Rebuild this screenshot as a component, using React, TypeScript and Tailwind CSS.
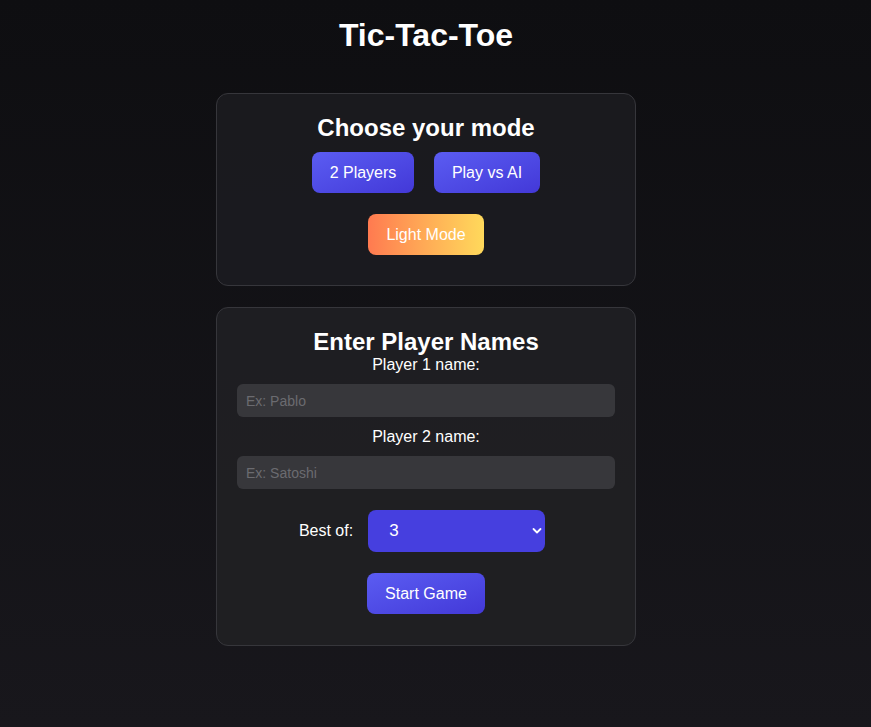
import React, { useState } from 'react';

const btnIndigo =
  'm-[10px] h-[41px] rounded-lg bg-gradient-to-br from-[#5b5cf2] to-[#4338d8] text-[16px] text-white';

const App = () => {
  const [bestOf, setBestOf] = useState('3');

  return (
    <div
      className="min-h-screen bg-gradient-to-b from-[#0e0e11] to-[#18171c] text-white flex flex-col items-center pr-[19px]"
      style={{ fontFamily: '"Liberation Sans", Arial, sans-serif' }}
    >
      {/* Title */}
      <h1 className="mt-[16px] text-[32px] leading-[38px] font-bold">Tic-Tac-Toe</h1>

      {/* Mode card */}
      <section className="mt-[39px] w-[420px] rounded-xl border border-[#36363b] bg-[#1c1c20]/90 px-[20px] pt-[20px] pb-[20px] flex flex-col items-center">
        <h2 className="text-[24px] leading-[28px] font-bold">Choose your mode</h2>
        <div className="flex flex-wrap justify-center">
          <button className={`${btnIndigo} w-[102px]`}>2 Players</button>
          <button className={`${btnIndigo} w-[106px]`}>Play vs AI</button>
        </div>
        <button className="m-[10px] mt-[11px] h-[41px] w-[116px] rounded-lg bg-gradient-to-r from-[#ff7a50] to-[#ffd95b] text-[16px] text-white">
          Light Mode
        </button>
      </section>

      {/* Names card */}
      <section className="mt-[21px] w-[420px] rounded-xl border border-[#36363b] bg-[#202024]/90 px-[20px] pt-[20px] pb-[21px] flex flex-col items-center">
        <h2 className="text-[24px] leading-[28px] font-bold">Enter Player Names</h2>
        <label className="text-[16px] leading-[18px]">Player 1 name:</label>
        <input
          className="mt-[10px] h-[33px] w-full rounded-md bg-[#37373b] px-[9px] text-[14px] text-white placeholder-[#6b6b70] outline-none"
          placeholder="Ex: Pablo"
        />
        <label className="mt-[11px] text-[16px] leading-[18px]">Player 2 name:</label>
        <input
          className="mt-[10px] h-[33px] w-full rounded-md bg-[#37373b] px-[9px] text-[14px] text-white placeholder-[#6b6b70] outline-none"
          placeholder="Ex: Satoshi"
        />
        <div className="mt-[21px] mr-[8px] flex items-center gap-[15px]">
          <span className="text-[16px]">Best of:</span>
          <div className="relative">
            <select
              value={bestOf}
              onChange={(e) => setBestOf(e.target.value)}
              className="h-[42px] w-[177px] appearance-none rounded-lg bg-[#463fdf] pl-[21px] text-[17px] text-white outline-none"
            >
              <option value="1">1</option>
              <option value="3">3</option>
              <option value="5">5</option>
            </select>
            <svg
              className="pointer-events-none absolute right-[3px] top-[17px]"
              width="10"
              height="8"
              viewBox="0 0 10 8"
              fill="none"
            >
              <path d="M1.5 2l3.5 3.5L8.5 2" stroke="white" strokeWidth="1.8" strokeLinecap="round" strokeLinejoin="round" />
            </svg>
          </div>
        </div>
        <button className={`${btnIndigo} mt-[21px] w-[118px]`}>Start Game</button>
      </section>
    </div>
  );
};

export default App;
